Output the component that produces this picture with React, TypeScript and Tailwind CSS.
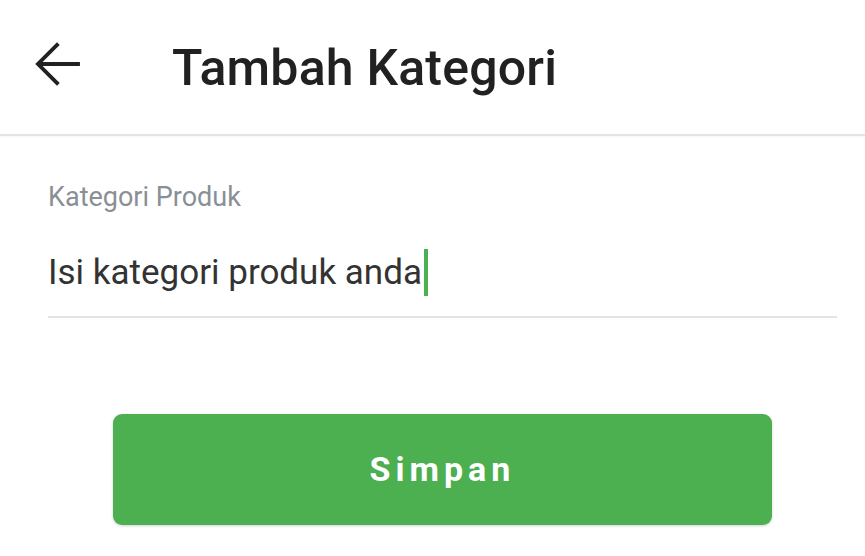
import { useState } from 'react'

export default function App() {
  const [value] = useState('Isi kategori produk anda')

  return (
    <div className="min-h-screen bg-white font-['Roboto',sans-serif]">
      {/* header */}
      <div className="h-[136px] flex items-center border-b-2 border-[#e4e4e4] shadow-[0_1px_2px_rgba(0,0,0,0.04)]">
        <button className="ml-[28px] w-[60px] h-[60px] flex items-center justify-center text-[#212121] -mt-[6px]">
          <svg width="60" height="60" viewBox="0 0 24 24" fill="none" stroke="currentColor" strokeWidth="1.55" strokeLinecap="square">
            <path d="M20 12H4.6" />
            <path d="M11.6 4.4L4 12l7.6 7.6" />
          </svg>
        </button>
        <h1 className="ml-[84px] text-[50px] font-medium text-[#212121] tracking-[0.2px] mt-[2px]">Tambah Kategori</h1>
      </div>

      {/* form */}
      <div className="pl-[48px] pr-[28px] pt-[43px]">
        <label className="block text-[27px] leading-[36px] text-[#8a8f96]">Kategori Produk</label>
        <div className="mt-[34px] border-b-2 border-[#e4e4e4] pb-[20px]">
          <div className="flex items-center text-[35px] leading-[47px] text-[#333333]">
            <span>{value}</span>
            <span className="ml-[2px] w-[4px] h-[47px] bg-[#4caf50]" />
          </div>
        </div>

        <div className="px-[65px] pt-[96px]">
          <button className="w-full h-[111px] rounded-[9px] bg-[#4caf50] shadow-[0_1px_3px_rgba(0,0,0,0.18)] text-white text-[34px] font-bold tracking-[5px]">
            Simpan
          </button>
        </div>
      </div>
    </div>
  )
}
